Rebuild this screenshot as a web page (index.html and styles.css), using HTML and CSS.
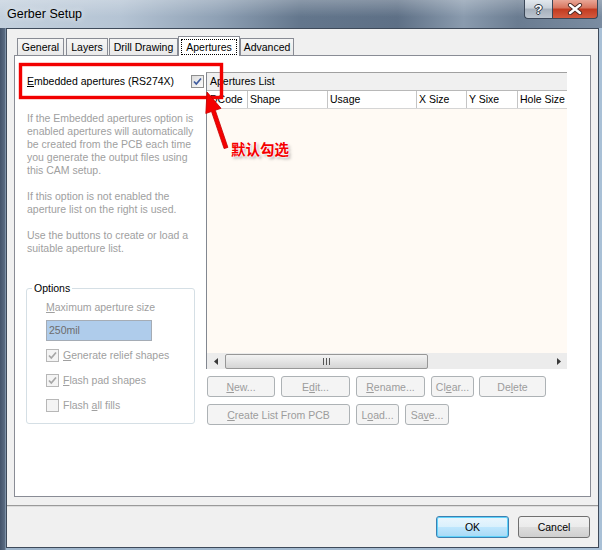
FILE: index.html
```html
<!DOCTYPE html>
<html lang="en">
<head>
    <meta charset="UTF-8">
    <title>Gerber Setup</title>
    <link rel="stylesheet" href="styles.css">
</head>
<body>
    <div class="window">
        <div class="titlebar">
            <span class="title">Gerber Setup</span>
            <div class="caption">
                <span class="cap-btn help">?</span>
                <span class="cap-btn close">
                    <svg width="16" height="12" viewBox="0 0 16 12">
                        <path d="M3 2 L13 10 M13 2 L3 10" stroke="#4a2a25" stroke-width="4.2" stroke-linecap="round"/>
                        <path d="M3 2 L13 10 M13 2 L3 10" stroke="#fff" stroke-width="2.4" stroke-linecap="round"/>
                    </svg>
                </span>
            </div>
        </div>

        <div class="client">
            <div class="tabs">
                <span class="tab t-general">General</span>
                <span class="tab t-layers">Layers</span>
                <span class="tab t-drill">Drill Drawing</span>
                <span class="tab active t-apertures"><span class="focus">Apertures</span></span>
                <span class="tab t-advanced">Advanced</span>
            </div>

            <div class="panel">
                <div class="left-col">
                    <div class="embed-row">
                        <span><u>E</u>mbedded apertures (RS274X)</span>
                        <span class="chk">
                            <svg width="11" height="11" viewBox="0 0 11 11"><path d="M2 5.5 L4.3 8 L9 2.5" fill="none" stroke="#3f5b9e" stroke-width="1.7"/></svg>
                        </span>
                    </div>

                    <div class="desc">
                        <p>If the Embedded apertures option is<br>enabled apertures will automatically<br>be created from the PCB each time<br>you generate the output files using<br>this CAM setup.</p>
                        <p>If this option is not enabled the<br>aperture list on the right is used.</p>
                        <p>Use the buttons to create or load a<br>suitable aperture list.</p>
                    </div>

                    <div class="group">
                        <span class="group-title">Options</span>
                        <div class="field-label"><u>M</u>aximum aperture size</div>
                        <div class="textbox">250mil</div>
                        <div class="check-row">
                            <span class="chk dis">
                                <svg width="11" height="11" viewBox="0 0 11 11"><path d="M2 5.5 L4.3 8 L9 2.5" fill="none" stroke="#a6a6a6" stroke-width="1.7"/></svg>
                            </span>
                            <span><u>G</u>enerate relief shapes</span>
                        </div>
                        <div class="check-row">
                            <span class="chk dis">
                                <svg width="11" height="11" viewBox="0 0 11 11"><path d="M2 5.5 L4.3 8 L9 2.5" fill="none" stroke="#a6a6a6" stroke-width="1.7"/></svg>
                            </span>
                            <span><u>F</u>lash pad shapes</span>
                        </div>
                        <div class="check-row">
                            <span class="chk dis"></span>
                            <span>Flash <u>a</u>ll fills</span>
                        </div>
                    </div>
                </div>

                <div class="right-col">
                    <div class="list">
                        <div class="list-caption">Apertures List</div>
                        <div class="list-head">
                            <span class="col c-dcode">DCode</span>
                            <span class="col c-shape">Shape</span>
                            <span class="col c-usage">Usage</span>
                            <span class="col c-xsize">X Size</span>
                            <span class="col c-ysize">Y Sixe</span>
                            <span class="col c-hole">Hole Size</span>
                        </div>
                        <div class="list-body"></div>
                        <div class="hscroll">
                            <span class="sb-arrow"><svg width="4" height="7" viewBox="0 0 4 7"><path d="M4 0 L0 3.5 L4 7 Z" fill="#3a3a3a"/></svg></span>
                            <span class="sb-thumb">
                                <svg width="7" height="7" viewBox="0 0 7 7"><path d="M0.5 0 V7 M3.5 0 V7 M6.5 0 V7" stroke="#555" stroke-width="1"/></svg>
                            </span>
                            <span class="sb-space"></span>
                            <span class="sb-arrow"><svg width="4" height="7" viewBox="0 0 4 7"><path d="M0 0 L4 3.5 L0 7 Z" fill="#3a3a3a"/></svg></span>
                        </div>
                    </div>

                    <div class="btn-row">
                        <button class="btn b-new"><u>N</u>ew...</button>
                        <button class="btn b-edit">E<u>d</u>it...</button>
                        <button class="btn b-rename"><u>R</u>ename...</button>
                        <button class="btn b-clear">Cl<u>e</u>ar...</button>
                        <button class="btn b-delete">De<u>l</u>ete</button>
                    </div>
                    <div class="btn-row">
                        <button class="btn b-create"><u>C</u>reate List From PCB</button>
                        <button class="btn b-load">L<u>o</u>ad...</button>
                        <button class="btn b-save">Sa<u>v</u>e...</button>
                    </div>
                </div>
            </div>

            <div class="footer">
                <button class="dlg-btn default">OK</button>
                <button class="dlg-btn">Cancel</button>
            </div>
        </div>

        <svg class="overlay" width="602" height="550" viewBox="0 0 602 550">
            <rect x="20.5" y="64.5" width="201" height="33" fill="none" stroke="#f20000" stroke-width="3.4"/>
            <path d="M207 92 L221 108.3 L215.3 110.3 L227.9 147.4 L224.1 148.6 L211.5 111.5 L205.8 113.5 Z" fill="#f50000" stroke="#c40000" stroke-width="0.8"/>
        </svg>
        <span class="note">默认勾选</span>
    </div>
</body>
</html>
```

FILE: styles.css
```css
body {
    margin: 0;
    font-family: "Liberation Sans", Arial, sans-serif;
    font-size: 10.5px;
    color: #000;
}
.window {
    position: relative;
    width: 602px;
    height: 550px;
    display: flex;
    flex-direction: column;
    background: linear-gradient(to right, #43536a 0, #5b6c82 5px, #9fb5cb 6px, #a9c0d6 100%);
    overflow: hidden;
}

/* title bar */
.titlebar {
    height: 28px;
    display: flex;
    background:
        linear-gradient(to bottom, rgba(255,255,255,0.25), rgba(255,255,255,0) 60%),
        linear-gradient(to right, #c3d0dd 0%, #b5c4d4 20%, #8fa1b5 36%, #63768c 50%, #5e7086 66%, #8a9bae 77%, #6a7c91 86%, #7a8ca1 100%);
}
.title {
    padding: 7px 0 0 7px;
    font-size: 12.5px;
    line-height: 15px;
    color: #000;
    text-shadow: 0 0 6px rgba(255,255,255,0.9);
}
.caption {
    display: flex;
    margin-left: auto;
    margin-right: 4px;
    align-self: flex-start;
}
.cap-btn {
    height: 19px;
    box-sizing: border-box;
    border: 1px solid #3b4758;
    border-top: none;
    display: flex;
    align-items: center;
    justify-content: center;
}
.help {
    width: 28px;
    border-right: none;
    border-radius: 0 0 0 4px;
    background: linear-gradient(to bottom, #e2e8ee 0%, #c9d1da 45%, #a6b0bc 50%, #bcc5cf 100%);
    color: #fff;
    font-weight: bold;
    font-size: 13px;
    text-shadow: 0 0 1px #2c3542, 1px 0 0 #2c3542, -1px 0 0 #2c3542, 0 1px 0 #2c3542, 0 -1px 0 #2c3542;
}
.close {
    width: 46px;
    border-radius: 0 0 4px 0;
    background: linear-gradient(to bottom, #e9a797 0%, #d7735d 45%, #c23a20 50%, #d45a3e 100%);
}

/* client area */
.client {
    margin-left: 6px;
    width: 593px;
    height: 520px;
    box-sizing: border-box;
    border: 1px solid #3e4a5a;
    background: #f0f0f0;
    display: flex;
    flex-direction: column;
}
.tabs {
    display: flex;
    align-items: flex-end;
    padding: 7px 0 0 10px;
    margin-bottom: -1px;
    position: relative;
    z-index: 1;
}
.tab {
    box-sizing: border-box;
    height: 17px;
    margin-bottom: 1px;
    border: 1px solid #898c95;
    border-bottom: none;
    background: linear-gradient(to bottom, #f6f6f6, #e9e9e9);
    text-align: center;
    padding-top: 2px;
    line-height: 13px;
}
.t-general { width: 47px; }
.t-layers { width: 42px; margin-left: 2px; }
.t-drill { width: 69px; margin-left: 1px; }
.t-apertures { width: 62px; }
.t-advanced { width: 54px; }
.tab.active {
    height: 20px;
    margin-bottom: 0;
    background: #fff;
    padding: 2px 2px 0;
}
.focus {
    display: block;
    height: 16px;
    box-sizing: border-box;
    border: 1px dotted #000;
    padding-top: 1px;
}

.panel {
    margin: 0 7px;
    height: 442px;
    box-sizing: border-box;
    border: 1px solid #898c95;
    background: #fff;
    display: grid;
    grid-template-columns: 191px 361px;
}

/* left column */
.embed-row {
    display: flex;
    align-items: center;
    justify-content: space-between;
    padding: 19px 2px 0 12px;
    line-height: 13px;
}
.chk {
    width: 13px;
    height: 13px;
    box-sizing: border-box;
    border: 1px solid #8e8f8f;
    background: linear-gradient(135deg, #dcdcdc, #fbfbfb);
    display: flex;
}
.chk.dis {
    border-color: #b7b7b7;
    background: #f4f4f4;
}
.desc {
    margin-top: 24px;
    padding-left: 12px;
    color: #a0a0a0;
    line-height: 13px;
    white-space: nowrap;
}
.desc p {
    margin: 0 0 13px;
}
.desc p:last-child {
    margin-bottom: 0;
}
.group {
    margin: 33px 0 0 11px;
    width: 169px;
    box-sizing: border-box;
    border: 1px solid #d5dfe5;
    border-radius: 3px;
    padding-bottom: 11px;
}
.group-title {
    display: block;
    width: max-content;
    margin: -7px 0 0 5px;
    padding: 0 2px;
    background: #fff;
    line-height: 13px;
}
.field-label {
    margin: 6px 0 0 19px;
    line-height: 13px;
    color: #a0a0a0;
}
.textbox {
    margin: 6px 0 0 19px;
    width: 106px;
    height: 21px;
    box-sizing: border-box;
    border: 1px solid #a5acb5;
    background: #afcceb;
    color: #6d6d6d;
    padding-left: 2px;
    line-height: 19px;
}
.check-row {
    display: flex;
    align-items: center;
    gap: 4px;
    margin: 12px 0 0 19px;
    line-height: 13px;
    color: #a0a0a0;
}
.textbox + .check-row {
    margin-top: 8px;
}

/* right column */
.right-col {
    padding-top: 16px;
}
.list {
    border-left: 1px solid #828790;
    border-top: 1px solid #a0a0a0;
}
.list-caption {
    height: 17px;
    line-height: 17px;
    padding-left: 3px;
    background: #f0f0f0;
}
.list-head {
    display: flex;
    height: 17px;
    border-top: 1px solid #b8b8b8;
    border-bottom: 1px solid #d5d5d5;
    background: #fff;
    line-height: 17px;
    overflow: hidden;
}
.col {
    box-sizing: border-box;
    padding-left: 2px;
    border-right: 1px solid #c5c5c5;
    white-space: nowrap;
    flex-shrink: 0;
}
.c-dcode { width: 41px; padding-left: 3px; }
.c-shape { width: 80px; }
.c-usage { width: 89px; }
.c-xsize { width: 50px; }
.c-ysize { width: 51px; }
.c-hole { width: 49px; border-right: none; overflow: hidden; }
.list-body {
    height: 244px;
    background: #fffaf4;
}
.hscroll {
    display: flex;
    align-items: center;
    height: 16px;
    background: #ececec;
}
.sb-arrow {
    width: 17px;
    display: flex;
    justify-content: center;
}
.sb-thumb {
    margin-left: 1px;
    width: 203px;
    height: 15px;
    box-sizing: border-box;
    border: 1px solid #979797;
    border-radius: 2px;
    background: linear-gradient(to bottom, #f3f3f3, #e4e4e4 50%, #d5d5d5);
    display: flex;
    align-items: center;
    justify-content: center;
}
.sb-space {
    flex: 1;
}
.btn-row {
    display: flex;
    margin-top: 7px;
}
.btn {
    height: 21px;
    box-sizing: border-box;
    border: 1px solid #adb2b5;
    border-radius: 3px;
    background: #f4f4f4;
    color: #9c9c9c;
    font: inherit;
    padding: 0;
}
.b-new { width: 68px; margin-left: 1px; }
.b-edit { width: 69px; margin-left: 6px; }
.b-rename { width: 69px; margin-left: 6px; }
.b-clear { width: 43px; margin-left: 6px; }
.b-delete { width: 67px; margin-left: 5px; }
.b-create { width: 143px; margin-left: 1px; }
.b-load { width: 43px; margin-left: 6px; }
.b-save { width: 44px; margin-left: 6px; }

/* footer */
.footer {
    margin-top: 8px;
    height: 42px;
    box-sizing: border-box;
    border-top: 1px solid #9a9a9a;
    box-shadow: inset 0 1px 0 #dcdcdc;
    display: flex;
    justify-content: flex-end;
    gap: 9px;
    padding: 10px 8px 0 0;
}
.dlg-btn {
    width: 72px;
    height: 22px;
    box-sizing: border-box;
    border: 1px solid #707070;
    border-radius: 3px;
    background: linear-gradient(to bottom, #f2f2f2 0%, #ebebeb 50%, #dddddd 51%, #cfcfcf 100%);
    font: inherit;
    color: #000;
    padding: 0;
}
.dlg-btn.default {
    width: 73px;
    border-color: #3c7fb1;
    box-shadow: inset 0 0 0 1px #5fd3fb;
    background: linear-gradient(to bottom, #eaf6fd 0%, #d9f0fc 50%, #bee6fd 51%, #a7d9f5 100%);
}

/* annotation on top */
.overlay {
    position: absolute;
    left: 0;
    top: 0;
    pointer-events: none;
}
.note {
    position: absolute;
    left: 231px;
    top: 139px;
    font-family: "Noto Sans CJK SC", sans-serif;
    font-size: 14.5px;
    font-weight: bold;
    line-height: 20px;
    color: #f50000;
    text-shadow: 0 0 2px #fff, 0 0 2px #fff, 0 0 3px #fff, 2px 2px 3px rgba(0,0,0,0.35);
}
```
